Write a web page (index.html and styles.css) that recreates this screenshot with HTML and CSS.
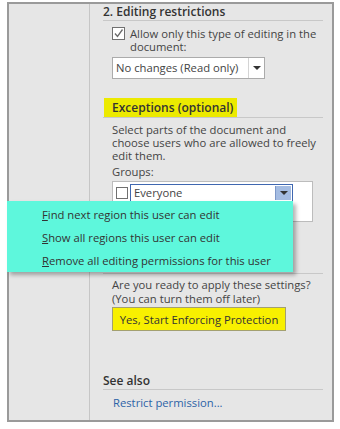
FILE: index.html
```html
<!DOCTYPE html>
<html lang="en">
<head>
    <meta charset="UTF-8">
    <title>Restrict Editing</title>
    <link rel="stylesheet" href="styles.css">
</head>
<body>
    <div class="frame">
        <div class="gutter"></div>

        <div class="pane">
            <h2 class="section-title">2. Editing restrictions</h2>

            <div class="check-row">
                <span class="checkbox">
                    <svg width="11" height="11" viewBox="0 0 11 11"><path d="M2 5.5 L4.5 8.5 L9.5 1.5" fill="none" stroke="#6a6a6a" stroke-width="1.3"/></svg>
                </span>
                <span class="check-label">Allow only this type of editing in the document:</span>
            </div>

            <div class="select">
                <span class="select-value">No changes (Read only)</span>
                <span class="select-arrow"><span class="tri"></span></span>
            </div>

            <h3 class="sub-title"><span class="mark">Exceptions (optional)</span></h3>

            <p class="note intro">Select parts of the document and choose users who are allowed to freely edit them.</p>
            <div class="field-label">Groups:</div>

            <div class="listbox">
                <div class="list-row">
                    <span class="checkbox"></span>
                    <div class="combo">
                        <span class="combo-value">Everyone</span>
                        <span class="combo-btn"><span class="tri"></span></span>
                    </div>
                </div>
            </div>

            <div class="rule"></div>

            <p class="note ready">Are you ready to apply these settings?<br>(You can turn them off later)</p>
            <button class="enforce">Yes, Start Enforcing Protection</button>

            <h2 class="section-title see-also">See also</h2>
            <a class="link" href="#">Restrict permission...</a>
        </div>

        <!-- context menu over the groups list -->
        <ul class="menu">
            <li><u>F</u>ind next region this user can edit</li>
            <li><u>S</u>how all regions this user can edit</li>
            <li><u>R</u>emove all editing permissions for this user</li>
        </ul>
    </div>
</body>
</html>
```

FILE: styles.css
```css
body {
    margin: 0;
    background-color: #fff;
    font-family: "Open Sans", "Noto Sans", sans-serif;
    font-size: 11.25px;
    color: #444;
}

.frame {
    position: relative;
    display: flex;
    box-sizing: border-box;
    width: 327px;
    height: 420px;
    margin: 2px 0 0 7px;
    border: 2px solid #9a9a9a;
    background-color: #e6e6e6;
}

.gutter {
    width: 80px;
    border-right: 1px solid #c6c6c6;
}

.pane {
    flex: 1;
    padding: 0 9px 0 13px;
}

.section-title {
    margin: 0;
    height: 16px;
    line-height: 16px;
    font-size: 12px;
    font-weight: 600;
    color: #333;
    border-bottom: 1px solid #c8c8c8;
}

.check-row {
    display: flex;
    align-items: flex-start;
    margin: 6px 0 0 9px;
}

.checkbox {
    display: inline-flex;
    align-items: center;
    justify-content: center;
    box-sizing: border-box;
    width: 13px;
    height: 13px;
    border: 1px solid #707070;
    background-color: #fff;
    flex-shrink: 0;
}

.check-label {
    margin-left: 5px;
    line-height: 13px;
}

.select {
    display: flex;
    box-sizing: border-box;
    width: 153px;
    height: 22px;
    margin: 4px 0 0 9px;
    border: 1px solid #ababab;
    background-color: #fff;
}

.select-value {
    flex: 1;
    padding-left: 3px;
    line-height: 20px;
    border-right: 1px solid #d4d4d4;
}

.select-arrow {
    display: flex;
    align-items: center;
    justify-content: center;
    width: 15px;
}

.tri {
    width: 0;
    height: 0;
    border-left: 4px solid transparent;
    border-right: 4px solid transparent;
    border-top: 4px solid #333;
}

.sub-title {
    margin: 19px 0 0;
    height: 19px;
    font-size: 12px;
    font-weight: 600;
    color: #333;
    border-bottom: 1px solid #c8c8c8;
}

.mark {
    display: inline-block;
    height: 19px;
    line-height: 19px;
    margin-left: 1px;
    padding: 0 4px 0 8px;
    background-color: #ecea00;
}

.note {
    margin: 5px 0 0 9px;
    line-height: 13px;
}

.intro {
    max-width: 206px;
}

.field-label {
    margin: 3px 0 0 9px;
    line-height: 13px;
}

.listbox {
    box-sizing: border-box;
    width: 201px;
    height: 41px;
    margin: 3px 0 0 9px;
    border: 1px solid #bcbcbc;
    background-color: #fff;
}

.list-row {
    display: flex;
    align-items: center;
    padding: 2px 0 0 3px;
}

.list-row .checkbox {
    width: 12px;
    height: 12px;
}

.combo {
    display: flex;
    box-sizing: border-box;
    width: 163px;
    height: 18px;
    margin-left: 2px;
    border: 1px solid #3f67b0;
}

.combo-value {
    flex: 1;
    padding-left: 3px;
    line-height: 16px;
}

.combo-btn {
    display: flex;
    align-items: center;
    justify-content: center;
    width: 15px;
    margin: 1px;
    background-color: #a4bce2;
    border-left: 1px solid #7d98c8;
}

.rule {
    margin-top: 51px;
    border-top: 1px solid #c8c8c8;
}

.ready {
    margin-top: 4px;
    line-height: 13.5px;
}

.enforce {
    display: block;
    box-sizing: border-box;
    width: 174px;
    height: 24px;
    margin: 2px 0 0 9px;
    padding: 0;
    font-family: inherit;
    font-size: 11.25px;
    color: #333;
    background-color: #f8f000;
    border: 1px solid #a3a070;
}

.see-also {
    margin-top: 42px;
}

.link {
    display: block;
    margin: 6px 0 0 10px;
    line-height: 14px;
    color: #2d63a6;
    text-decoration: none;
}

.menu {
    position: absolute;
    left: -2px;
    top: 197px;
    box-sizing: border-box;
    width: 286px;
    height: 71px;
    margin: 0;
    padding: 2px 0 0 35px;
    list-style: none;
    background-color: #5ef7dc;
    box-shadow: 3px 3px 4px rgba(0, 0, 0, 0.3);
    color: #333;
}

.menu li {
    line-height: 23px;
}
```
